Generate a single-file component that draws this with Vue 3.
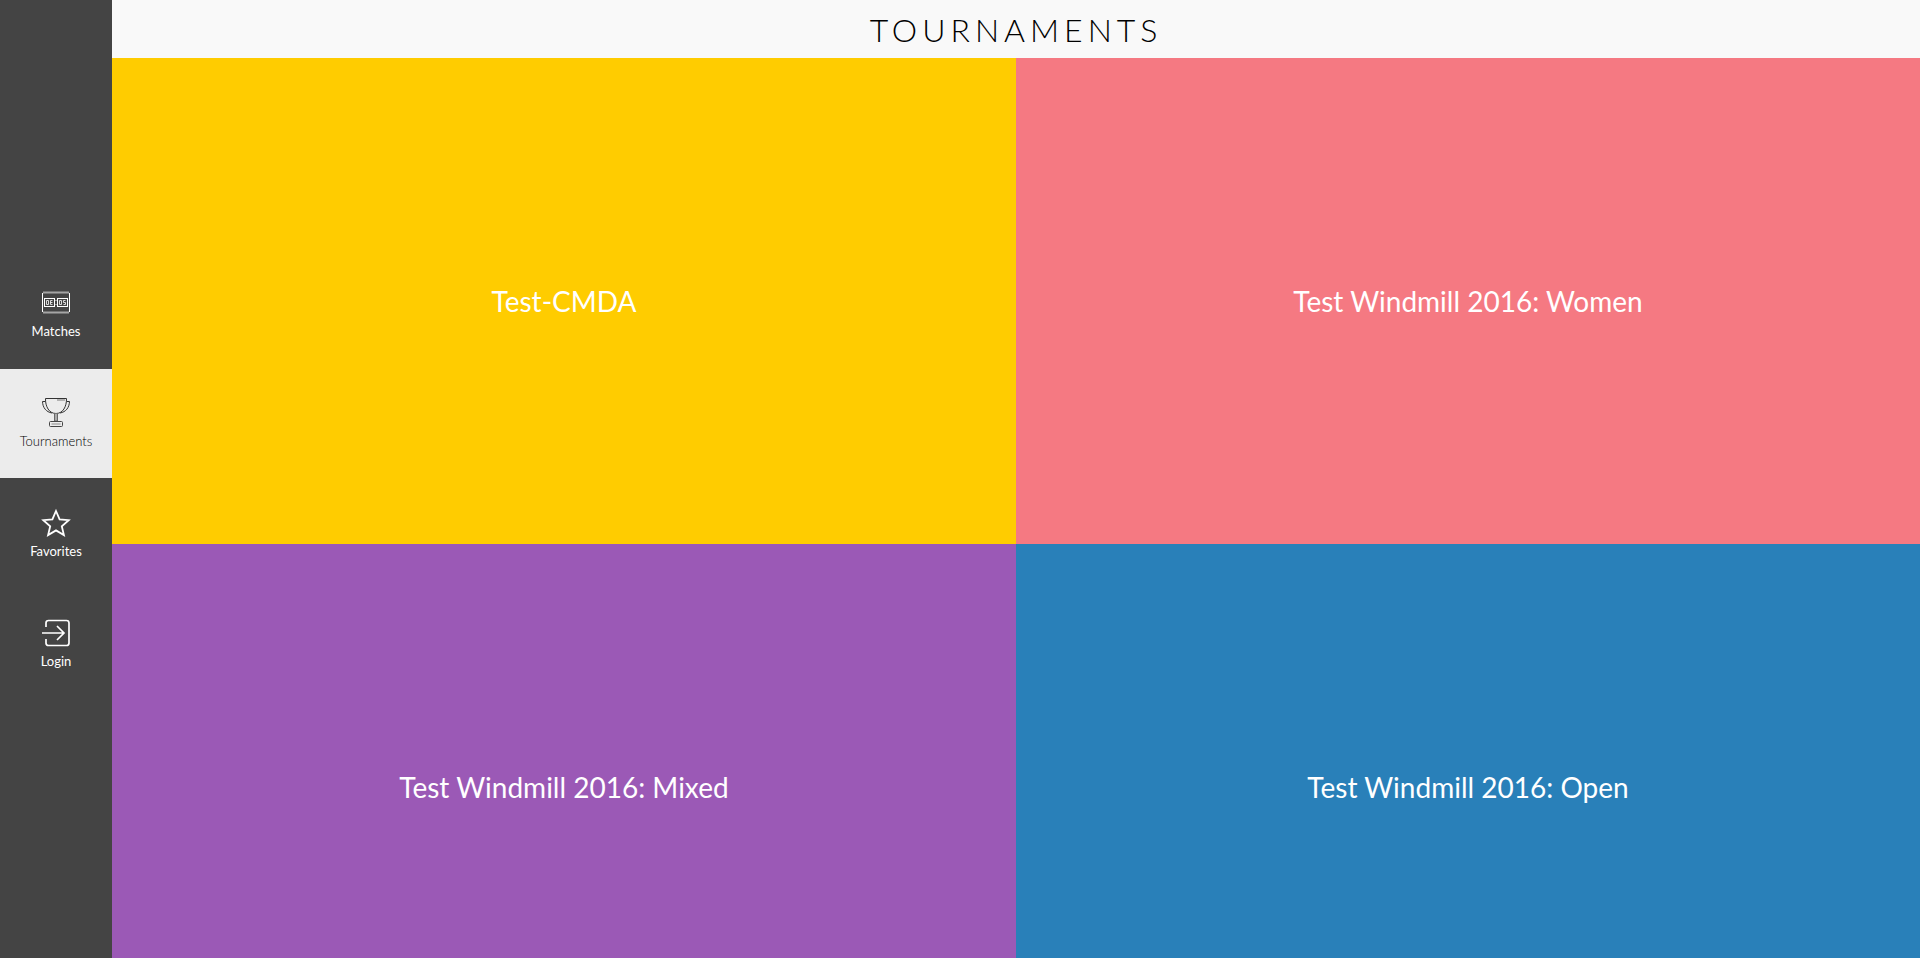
<script setup>
import { ref } from 'vue'

const active = ref('Tournaments')
const navigation = ['Matches', 'Tournaments', 'Favorites', 'Login']
const tournaments = [
  { name: 'Test-CMDA', tone: 'yellow' },
  { name: 'Test Windmill 2016: Women', tone: 'pink' },
  { name: 'Test Windmill 2016: Mixed', tone: 'purple' },
  { name: 'Test Windmill 2016: Open', tone: 'blue' },
]
</script>

<template>
  <div class="app">
    <nav class="sidebar" aria-label="Main">
      <a
        v-for="item in navigation"
        :key="item"
        href="#"
        class="nav-item"
        :class="{ active: active === item }"
        @click.prevent="active = item"
      >
        <svg v-if="item === 'Matches'" class="icon" viewBox="0 0 30 30" aria-hidden="true">
          <path d="M2 5.5h26M2 25.500h26" stroke="#a5a5a5" stroke-width="2" />
          <path d="M1.500 6v19M28.500 6v19" stroke-width="1" />
          <path d="M13.500 13.500h3M13.500 17.500h3" stroke="#999" />
          <rect x="3.500" y="11.500" width="10" height="8" stroke-width="1" />
          <rect x="16.500" y="11.500" width="10" height="8" stroke-width="1" />
          <path d="M5.500 13.500h2v4h-2zM11.500 13.500h-2v4h2M9.500 15.500h2M18.500 13.500h2v4h-2zM24.500 13.500h-2v2h2v2h-2" stroke-width=".8" />
        </svg>
        <svg v-else-if="item === 'Tournaments'" class="icon" viewBox="0 0 30 30" aria-hidden="true">
          <g stroke="#333" stroke-width="1">
            <path d="M4.500 1.500h21c.2 8-3.500 15-10.500 15s-10.700-7-10.500-15z" />
            <path d="M4.500 4.500h-3c.2 6 3.500 10.500 9.500 11.500M25.500 4.500h3c-.2 6-3.500 10.500-9.500 11.500" />
            <path d="M16 3h8" stroke="#777" />
            <path d="M13.500 16.500v7.500h3v-7.500" fill="#aaa" stroke="#666" />
            <rect x="8.500" y="24.500" width="13" height="5" rx="1" stroke="#444" />
            <path d="M10.500 27h9" stroke="#bbb" stroke-width="2" />
          </g>
        </svg>
        <svg v-else-if="item === 'Favorites'" class="icon" viewBox="0 -1 30 30" aria-hidden="true">
          <path d="m15 3 3.600 8.400 9.100.8-6.900 6 2.100 8.900-7.900-4.700-7.900 4.700 2.100-8.900-6.900-6 9.100-.8z" stroke-width="1.800" />
        </svg>
        <svg v-else class="icon" viewBox="0 -1 30 30" aria-hidden="true">
          <path d="M5 9V5q0-2.500 2.500-2.500h18Q28 2.500 28 5v20q0 2.500-2.500 2.500h-18Q5 27.500 5 25v-4M1 15h22M16 8l7 7-7 7" stroke-width="1.700" />
        </svg>
        <span>{{ item }}</span>
      </a>
    </nav>
    <main class="content">
      <header class="header"><h1>TOURNAMENTS</h1></header>
      <section class="grid">
        <a v-for="t in tournaments" :key="t.name" href="#" class="tile" :class="t.tone" @click.prevent>{{ t.name }}</a>
      </section>
    </main>
  </div>
</template>

<style>
body { margin: 0; }
</style>

<style scoped>
.app {
  display: flex;
  height: 100vh;
  overflow: hidden;
  font-family: Lato, sans-serif;
}
.sidebar {
  flex: 0 0 112px;
  box-sizing: border-box;
  padding-bottom: 1px;
  display: flex;
  flex-direction: column;
  justify-content: center;
  gap: 1px;
  background: #444;
}
.nav-item {
  box-sizing: border-box;
  height: 109px;
  padding-bottom: 2px;
  display: flex;
  flex-direction: column;
  align-items: center;
  justify-content: center;
  gap: 6px;
  color: #fff;
  font-size: 13px;
  line-height: 16px;
  text-decoration: none;
}
.nav-item.active {
  background: #ececec;
  color: #000;
  font-weight: 300;
}
.icon {
  width: 30px;
  height: 30px;
  fill: none;
  stroke: currentColor;
}
.content {
  flex: 1;
  min-width: 0;
  display: flex;
  flex-direction: column;
}
.header {
  flex: none;
  padding-top: 2px;
  background: #f9f9f9;
  text-align: center;
}
h1 {
  margin: 0;
  color: #000;
  font-size: 32px;
  font-weight: 300;
  line-height: 56px;
  letter-spacing: 5px;
}
.grid {
  flex: 1;
  min-height: 0;
  overflow: hidden;
  display: grid;
  grid-template-columns: 1fr 1fr;
  grid-auto-rows: 54%;
}
.tile {
  display: flex;
  align-items: center;
  justify-content: center;
  color: #fff;
  font-size: 28px;
  font-weight: 400;
  text-decoration: none;
}
.yellow { background: #ffcc00; }
.pink { background: #f57982; }
.purple { background: #9b59b6; }
.blue { background: #2980b9; }
</style>
